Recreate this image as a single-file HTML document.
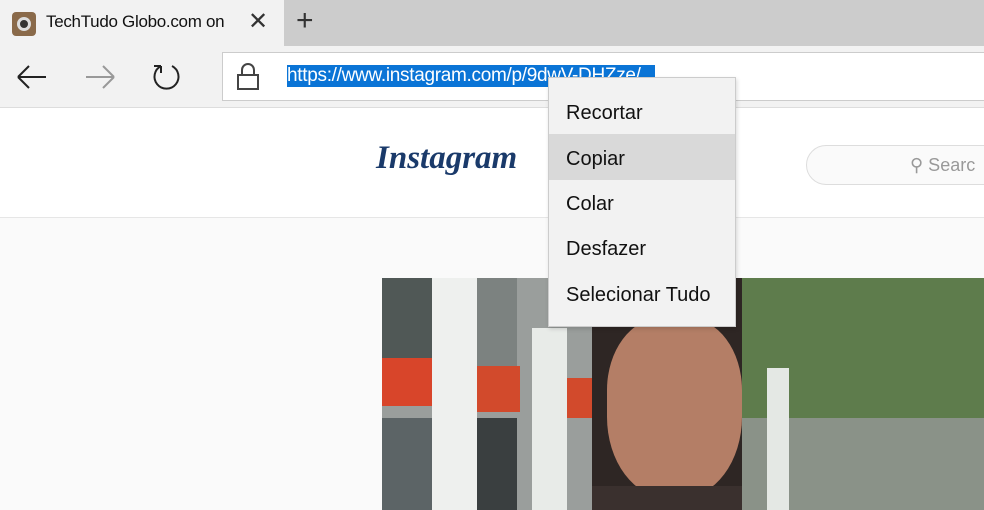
<!DOCTYPE html>
<html><head><style>
*{margin:0;padding:0;box-sizing:border-box}
body{width:984px;height:510px;overflow:hidden;background:#fafafa;font-family:"Liberation Sans",sans-serif;position:relative}
.a{position:absolute}
.m{position:absolute;left:566px;font-size:20px;color:#111;line-height:24px}
</style></head><body>
<div class="a" style="left:0;top:0;width:984px;height:46px;background:#cccccc"></div>
<div class="a" style="left:0;top:0;width:284px;height:46px;background:#f2f2f2"></div>
<div class="a" style="left:12px;top:12px;width:24px;height:24px;border-radius:4px;background:#8a6a4a"></div>
<div class="a" style="left:17px;top:17px;width:14px;height:14px;border-radius:50%;background:#333;border:3px solid #ddd"></div>
<div class="a" style="left:46px;top:12px;font-size:17px;color:#111;width:192px;overflow:hidden;white-space:nowrap;letter-spacing:-0.3px">TechTudo Globo.com on</div>
<div class="a" style="left:248px;top:7px;font-size:24px;color:#333;font-weight:300">✕</div>
<div class="a" style="left:296px;top:4px;font-size:30px;color:#333">+</div>
<div class="a" style="left:0;top:46px;width:984px;height:62px;background:#f2f2f2;border-bottom:1px solid #ddd"></div>
<svg class="a" style="left:14px;top:62px" width="36" height="30"><path d="M4 15H32M4 15L15 4M4 15L15 26" stroke="#222" stroke-width="2" fill="none"/></svg>
<svg class="a" style="left:82px;top:62px" width="36" height="30"><path d="M4 15H32M32 15L21 4M32 15L21 26" stroke="#999" stroke-width="2" fill="none"/></svg>
<svg class="a" style="left:150px;top:60px" width="34" height="34"><path d="M11 6A12 12 0 1 0 22 6" stroke="#222" stroke-width="2" fill="none"/><path d="M11 6L11 13M11 6L4 6" stroke="#222" stroke-width="2" fill="none"/></svg>
<div class="a" style="left:222px;top:52px;width:770px;height:49px;background:#fff;border:1px solid #ccc"></div>
<svg class="a" style="left:236px;top:62px" width="24" height="30"><path d="M6 13V8a6 6 0 0 1 12 0v5" stroke="#444" stroke-width="2" fill="none"/><rect x="2" y="13" width="20" height="14" stroke="#444" stroke-width="2" fill="none"/></svg>
<div class="a" style="left:287px;top:65px;height:22px;width:368px;background:#0a74d6;color:#fff;font-size:19px;line-height:22px;white-space:nowrap;overflow:hidden;letter-spacing:-0.3px">https://www.instagram.com/p/9dwV-DHZze/</div>
<div class="a" style="left:0;top:108px;width:984px;height:110px;background:#fff;border-bottom:1px solid #e6e6e6"></div>
<div class="a" style="left:376px;top:140px;font-family:'Liberation Serif',serif;font-style:italic;font-size:33px;color:#1a3a6a;font-weight:bold">Instagram</div>
<div class="a" style="left:806px;top:145px;width:200px;height:40px;border:1px solid #ddd;border-radius:20px;background:#fafafa"></div>
<div class="a" style="left:910px;top:155px;font-size:18px;color:#999">⚲ Searc</div>
<div class="a" style="left:382px;top:278px;width:602px;height:232px;background:#6b7a65;overflow:hidden">
<div class="a" style="left:0;top:0;width:220px;height:232px;background:#9a9e9c"></div>
<div class="a" style="left:0;top:0;width:50px;height:80px;background:#505856"></div>
<div class="a" style="left:95px;top:0;width:40px;height:90px;background:#7c8280"></div>
<div class="a" style="left:0;top:80px;width:50px;height:48px;background:#d8452a"></div>
<div class="a" style="left:92px;top:88px;width:46px;height:46px;background:#d24a2c"></div>
<div class="a" style="left:183px;top:100px;width:30px;height:40px;background:#d24a2c"></div>
<div class="a" style="left:50px;top:0;width:45px;height:232px;background:#eef0ee"></div>
<div class="a" style="left:150px;top:50px;width:35px;height:182px;background:#e8ebe8"></div>
<div class="a" style="left:95px;top:140px;width:40px;height:92px;background:#3a3f40"></div>
<div class="a" style="left:0;top:140px;width:50px;height:92px;background:#5c6466"></div>
<div class="a" style="left:340px;top:0;width:262px;height:232px;background:#5e7c4c"></div>
<div class="a" style="left:340px;top:140px;width:262px;height:92px;background:#8a9288"></div>
<div class="a" style="left:385px;top:90px;width:22px;height:142px;background:#e4e8e4"></div>
<div class="a" style="left:210px;top:0;width:150px;height:232px;background:#2e2624"></div>
<div class="a" style="left:225px;top:40px;width:135px;height:180px;background:#b47e66;border-radius:40% 40% 45% 45%"></div>
<div class="a" style="left:210px;top:208px;width:150px;height:24px;background:#3a302e"></div>
</div>
<div class="a" style="left:548px;top:77px;width:188px;height:250px;background:#f2f2f2;border:1px solid #ccc;box-shadow:1px 2px 4px rgba(0,0,0,.15)"></div>
<div class="a" style="left:549px;top:134px;width:186px;height:46px;background:#d9d9d9"></div>
<div class="m" style="top:101px">Recortar</div>
<div class="m" style="top:147px">Copiar</div>
<div class="m" style="top:192px">Colar</div>
<div class="m" style="top:237px">Desfazer</div>
<div class="m" style="top:283px">Selecionar Tudo</div>
</body></html>
